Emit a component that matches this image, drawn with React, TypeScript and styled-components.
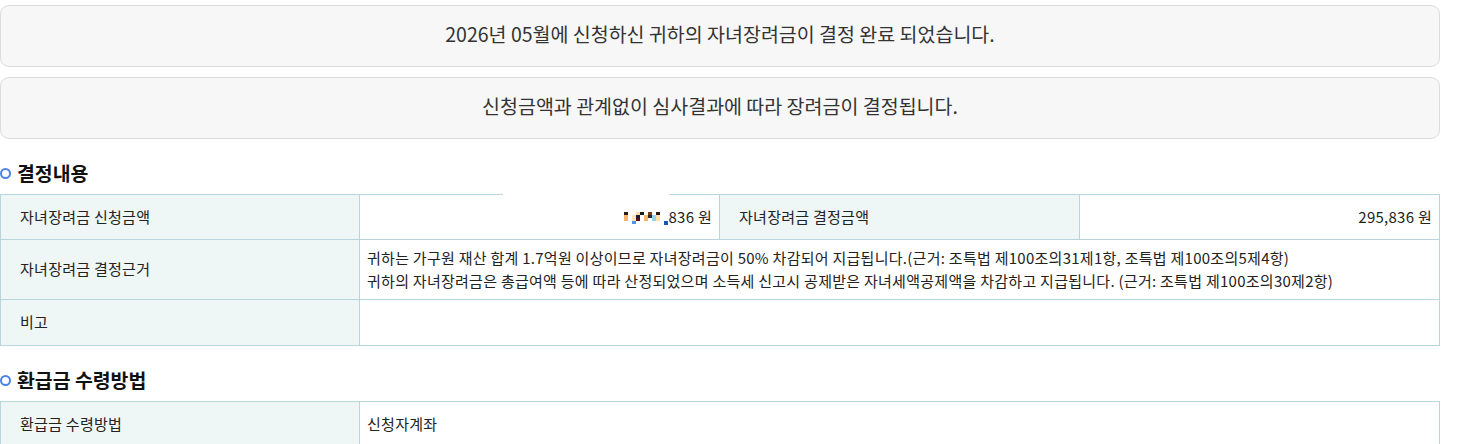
import React from "react";
import styled, { createGlobalStyle } from "styled-components";

const Global = createGlobalStyle`
  html, body { margin: 0; padding: 0; background: #fff; }
  body { font-family: "Noto Sans CJK KR", "Noto Sans", sans-serif; color: #222; }
  * { box-sizing: border-box; }
`;

const Page = styled.div`
  width: 1440px;
  padding-top: 5px;
  display: flex;
  flex-direction: column;
`;

const Notice = styled.div`
  height: 62px;
  padding-bottom: 6px;
  border: 1px solid #dcdcdc;
  border-radius: 9px;
  background: #f7f7f7;
  display: flex;
  align-items: center;
  justify-content: center;
  font-size: 19.5px;
  color: #333;
  & + & { margin-top: 10px; }
`;

const SectionTitle = styled.h3`
  margin: 21px 0 10px;
  height: 24px;
  display: flex;
  align-items: center;
  gap: 6px;
  font-size: 19.4px;
  font-weight: 700;
  color: #111;
`;

const Ring = styled.span`
  width: 11px;
  height: 11px;
  margin-left: 0;
  margin-top: 2px;
  border-radius: 50%;
  border: 2.6px solid #4a84e6;
  flex: none;
`;

const Grid = styled.div`
  position: relative;
  display: grid;
  grid-template-columns: 359px 360px 360px 360px;
  border-top: 1px solid #b8d6db;
  border-left: 1px solid #b8d6db;
  font-size: 15px;
  letter-spacing: 0.27px;
  color: #222;
`;

const Cell = styled.div<{ $label?: boolean; $h: number; $span?: number; $right?: boolean }>`
  height: ${(p) => p.$h}px;
  grid-column: span ${(p) => p.$span ?? 1};
  border-right: 1px solid #b8d6db;
  border-bottom: 1px solid #b8d6db;
  background: ${(p) => (p.$label ? "#eef7f6" : "#fff")};
  padding: ${(p) => (p.$label ? "0 0 2px 19px" : "0 7px 2px 7px")};
  display: flex;
  flex-direction: column;
  justify-content: center;
  align-items: ${(p) => (p.$right ? "flex-end" : "flex-start")};
  line-height: 23px;
  white-space: nowrap;
`;

const Amount = styled.span`
  display: inline-flex;
  align-items: center;
`;

const Gap = styled.div`
  position: absolute;
  top: -2px;
  left: 502px;
  width: 166px;
  height: 4px;
  background: #fff;
`;

const Mosaic = () => (
  <svg width="48" height="16" viewBox="0 0 46 16" style={{ marginTop: 3 }}>
    <rect x="2" y="2" width="4" height="3" fill="#2b1a17" />
    <rect x="2" y="5" width="4" height="6" fill="#f7b36a" />
    <rect x="10" y="5" width="4" height="6" fill="#fde3b8" />
    <rect x="10" y="11" width="4" height="3" fill="#4f93e6" />
    <rect x="14" y="2" width="4" height="3" fill="#fbdcaa" />
    <rect x="14" y="5" width="4" height="3" fill="#1c1c3a" />
    <rect x="14" y="8" width="4" height="3" fill="#5a0f1c" />
    <rect x="18" y="2" width="4" height="3" fill="#1a1a1a" />
    <rect x="22" y="5" width="4" height="6" fill="#f9b870" />
    <rect x="26" y="2" width="4" height="3" fill="#7a3a16" />
    <rect x="26" y="5" width="4" height="3" fill="#2a2a2a" />
    <rect x="30" y="5" width="4" height="6" fill="#8fd3f0" />
    <rect x="34" y="2" width="4" height="3" fill="#2a1616" />
    <rect x="34" y="5" width="4" height="6" fill="#fde0a8" />
    <rect x="42" y="11" width="4" height="4" fill="#1d55b8" />
  </svg>
);

export default function App() {
  return (
    <>
      <Global />
      <Page>
        <Notice>2026년 05월에 신청하신 귀하의 자녀장려금이 결정 완료 되었습니다.</Notice>
        <Notice>신청금액과 관계없이 심사결과에 따라 장려금이 결정됩니다.</Notice>

        <SectionTitle>
          <Ring />
          결정내용
        </SectionTitle>
        <Grid>
          <Gap />
          <Cell $label $h={45}>자녀장려금 신청금액</Cell>
          <Cell $h={45} $right>
            <Amount>
              <Mosaic />
              836 원
            </Amount>
          </Cell>
          <Cell $label $h={45}>자녀장려금 결정금액</Cell>
          <Cell $h={45} $right>295,836 원</Cell>

          <Cell $label $h={60}>자녀장려금 결정근거</Cell>
          <Cell $h={60} $span={3}>
            <span>귀하는 가구원 재산 합계 1.7억원 이상이므로 자녀장려금이 50% 차감되어 지급됩니다.(근거: 조특법 제100조의31제1항, 조특법 제100조의5제4항)</span>
            <span>귀하의 자녀장려금은 총급여액 등에 따라 산정되었으며 소득세 신고시 공제받은 자녀세액공제액을 차감하고 지급됩니다. (근거: 조특법 제100조의30제2항)</span>
          </Cell>

          <Cell $label $h={46}>비고</Cell>
          <Cell $h={46} $span={3} />
        </Grid>

        <SectionTitle>
          <Ring />
          환급금 수령방법
        </SectionTitle>
        <Grid>
          <Cell $label $h={45}>환급금 수령방법</Cell>
          <Cell $h={45} $span={3}>신청자계좌</Cell>
        </Grid>
      </Page>
    </>
  );
}
